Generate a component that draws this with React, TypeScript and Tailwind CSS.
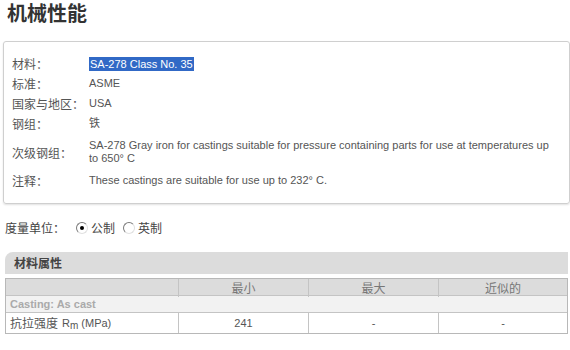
const rows = [
  { label: "材料：", value: "SA-278 Class No. 35", selected: true },
  { label: "标准：", value: "ASME" },
  { label: "国家与地区：", value: "USA" },
  { label: "钢组：", value: "铁" },
];

function Radio({ checked }: { checked?: boolean }) {
  return (
    <span className="relative inline-flex w-[12px] h-[12px] rounded-full border border-t-[#7a7a7a] border-l-[#7a7a7a] border-r-[#e0e0e0] border-b-[#e0e0e0] bg-white items-center justify-center">
      {checked && <span className="w-[4px] h-[4px] rounded-full bg-black" />}
    </span>
  );
}

export default function App() {
  return (
    <div className="w-[570px] h-[350px] overflow-hidden bg-white text-[#555] font-['Liberation_Sans','Noto_Sans_CJK_SC',sans-serif]">
      {/* Title */}
      <div className="h-[41px] pl-[7px]">
        <h1 className="text-[20px] leading-[26px] font-bold text-[#333] font-['Noto_Sans_CJK_SC',sans-serif]">
          机械性能
        </h1>
      </div>

      {/* Material card */}
      <div className="ml-[3px] w-[567px] h-[163px] border border-[#cfcfcf] rounded-[3px] shadow-[0_1px_2px_rgba(0,0,0,0.12)] pt-[15px] pl-[8px]">
        <div className="flex flex-col gap-[7px]">
          {rows.map((r) => (
            <div key={r.label} className="flex items-center h-[13px]">
              <span className="w-[77px] text-[12px] leading-[13px] font-['Noto_Sans_CJK_SC',sans-serif]">{r.label}</span>
              {r.selected ? (
                <span className="bg-[#3169c6] text-white text-[11px] leading-[14px] px-[1px]">{r.value}</span>
              ) : (
                <span className="text-[11px] leading-[13px]">{r.value}</span>
              )}
            </div>
          ))}
        </div>
        <div className="flex items-center mt-[9px]">
          <span className="w-[77px] text-[12px] leading-[13px] font-['Noto_Sans_CJK_SC',sans-serif]">次级钢组：</span>
          <span className="w-[470px] text-[11px] leading-[13px]">
            SA-278 Gray iron for castings suitable for pressure containing parts for use at temperatures up to 650° C
          </span>
        </div>
        <div className="flex items-center mt-[9px]">
          <span className="w-[77px] text-[12px] leading-[13px] font-['Noto_Sans_CJK_SC',sans-serif]">注释：</span>
          <span className="text-[11px] leading-[13px]">These castings are suitable for use up to 232° C.</span>
        </div>
      </div>

      {/* Units */}
      <div className="flex items-center h-[13px] mt-[17px] pl-[5px] text-[12px] text-[#444] font-['Noto_Sans_CJK_SC',sans-serif]">
        <span className="w-[71px]">度量单位：</span>
        <Radio checked />
        <span className="ml-[3px] mr-[8px]">公制</span>
        <Radio />
        <span className="ml-[3px]">英制</span>
      </div>

      {/* Properties */}
      <div className="ml-[5px] w-[563px] mt-[18px] h-[22px] bg-[#dcdcdc] rounded-tl-[8px] flex items-center pl-[9px] text-[12px] font-bold text-[#444] font-['Noto_Sans_CJK_SC',sans-serif]">
        材料属性
      </div>
      <div className="ml-[5px] mt-[4px] w-[563px] border border-[#b8b8b8] text-[11px]">
        <div className="grid grid-cols-[173px_130px_130px_1fr] h-[17px] bg-[#dcdcdc] text-[12px] text-[#777] font-['Noto_Sans_CJK_SC',sans-serif] border-b border-[#c4c4c4]">
          <div className="border-r border-[#c4c4c4]" />
          <div className="border-r border-[#c4c4c4] flex items-center justify-center">最小</div>
          <div className="border-r border-[#c4c4c4] flex items-center justify-center">最大</div>
          <div className="flex items-center justify-center">近似的</div>
        </div>
        <div className="h-[17px] bg-[#f2f2f2] flex items-center pl-[4px] font-bold text-[#aaa] border-b border-[#c4c4c4]">
          Casting: As cast
        </div>
        <div className="grid grid-cols-[173px_130px_130px_1fr] h-[20px] bg-white text-[#555]">
          <div className="border-r border-[#c4c4c4] flex items-center pl-[4px]">
            <span className="font-['Noto_Sans_CJK_SC',sans-serif] text-[12px]">抗拉强度</span>
            <span className="ml-[4px]">R</span>
            <sub className="text-[10px] relative top-[3px]">m</sub>
            <span className="ml-[3px]">(MPa)</span>
          </div>
          <div className="border-r border-[#c4c4c4] flex items-center justify-center">241</div>
          <div className="border-r border-[#c4c4c4] flex items-center justify-center">-</div>
          <div className="flex items-center justify-center">-</div>
        </div>
      </div>
    </div>
  );
}
